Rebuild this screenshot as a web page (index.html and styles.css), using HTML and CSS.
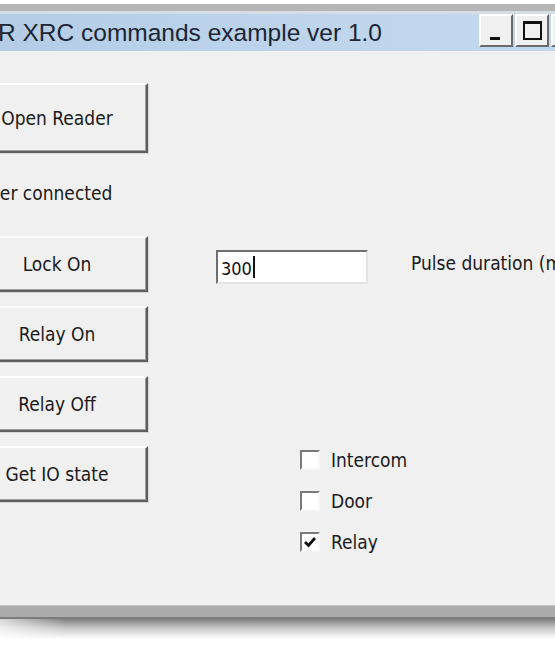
FILE: index.html
```html
<!DOCTYPE html>
<html lang="en">
<head>
    <meta charset="UTF-8">
    <meta name="viewport" content="width=device-width, initial-scale=1.0">
    <title>XRC commands example</title>
    <link rel="stylesheet" href="styles.css">
</head>
<body>
    <div class="window">
        <div class="titlebar">
            <span class="title">R XRC commands example ver 1.0</span>
            <div class="caption-buttons">
                <button class="cap-btn min"><span class="min-glyph"></span></button>
                <button class="cap-btn max"><span class="max-glyph"></span></button>
                <button class="cap-btn close"></button>
            </div>
        </div>
        <div class="client">
            <button class="btn open">Open Reader</button>
            <div class="status">Reader connected</div>

            <div class="row">
                <button class="btn">Lock On</button>
                <input class="field" type="text" value="300">
                <span class="caret"></span>
                <span class="label">Pulse duration (ms)</span>
            </div>
            <div class="row">
                <button class="btn">Relay On</button>
            </div>
            <div class="row">
                <button class="btn">Relay Off</button>
            </div>
            <div class="row">
                <button class="btn">Get IO state</button>
                <div class="checks">
                    <label class="check"><span class="box"></span>Intercom</label>
                    <label class="check"><span class="box"></span>Door</label>
                    <label class="check"><span class="box">
                        <svg width="14" height="14" viewBox="0 0 14 14"><path d="M2 7 L5.5 10.5 L12 3" fill="none" stroke="#111" stroke-width="2.8"/></svg>
                    </span>Relay</label>
                </div>
            </div>
        </div>
        <div class="frame-bottom"></div>
        <div class="shadow"></div>
    </div>
</body>
</html>
```

FILE: styles.css
```css
body {
    margin: 0;
    background-color: #ffffff;
    font-family: "DejaVu Sans Condensed", "DejaVu Sans", sans-serif;
    overflow: hidden;
}

.window {
    padding-top: 4px;
}

.titlebar {
    display: flex;
    align-items: center;
    justify-content: space-between;
    height: 37px;
    border-top: 7px solid #b6b6b6;
    box-shadow: inset 0 3px 0 #d8dde3;
    background: linear-gradient(to right, #b4cce6, #bed5ec 60%, #c2d8ee);
    padding-top: 3px;
    overflow: hidden;
}

.title {
    margin-left: -2px;
    font-family: "Liberation Sans", Arial, sans-serif;
    font-size: 24.5px;
    color: #1c2533;
    white-space: nowrap;
}

.caption-buttons {
    display: flex;
    gap: 2px;
    margin-right: -30px;
    align-self: flex-start;
}

.cap-btn {
    width: 34px;
    height: 33px;
    padding: 0;
    background-color: #f0f0f0;
    border: 2px solid;
    border-color: #ffffff #6a6a6a #6a6a6a #ffffff;
    position: relative;
}

.min-glyph {
    position: absolute;
    left: 9px;
    bottom: 5px;
    width: 10px;
    height: 3px;
    background-color: #111;
}

.max-glyph {
    position: absolute;
    left: 6px;
    top: 5px;
    width: 15px;
    height: 14px;
    border: 2px solid #111;
    border-top-width: 3px;
}

.client {
    background-color: #f0f0f0;
    height: 554px;
    padding-top: 32px;
    box-sizing: border-box;
}

.btn {
    display: block;
    flex-shrink: 0;
    margin-left: -34px;
    width: 182px;
    height: 56px;
    background-color: #f0f0f0;
    border: 2px solid;
    border-color: #ffffff #5e5e5e #5e5e5e #ffffff;
    box-shadow: inset -1px -1px 0 #a0a0a0, 1px 1px 0 #d6d6d6;
    font-family: "DejaVu Sans Condensed", "DejaVu Sans", sans-serif;
    font-size: 19px;
    color: #1a1a1a;
    padding: 0;
}

.btn.open {
    height: 70px;
    margin-bottom: 29px;
}

.status {
    font-size: 19px;
    color: #1a1a1a;
    margin-left: -43px;
    height: 22px;
    line-height: 22px;
    margin-bottom: 32px;
    white-space: nowrap;
}

.row {
    display: flex;
    align-items: flex-start;
    margin-bottom: 14px;
}

.field {
    flex-shrink: 0;
    margin-left: 68px;
    margin-top: 14px;
    width: 152px;
    height: 34px;
    box-sizing: border-box;
    border: 2px solid;
    border-color: #6e6e6e #e4e4e4 #e4e4e4 #6e6e6e;
    background-color: #fff;
    font-family: "DejaVu Sans Condensed", "DejaVu Sans", sans-serif;
    font-size: 18px;
    padding: 2px 3px 0;
    color: #111;
}

.caret {
    flex-shrink: 0;
    width: 2px;
    height: 22px;
    background-color: #111;
    margin-left: -115px;
    margin-top: 20px;
    margin-right: 113px;
}

.label {
    margin-left: 43px;
    margin-top: 16px;
    font-size: 19px;
    color: #1a1a1a;
    white-space: nowrap;
}

.checks {
    display: flex;
    flex-direction: column;
    gap: 20px;
    margin-left: 152px;
    margin-top: 3px;
}

.check {
    display: flex;
    align-items: center;
    height: 21px;
    font-size: 19px;
    color: #1a1a1a;
}

.box {
    display: flex;
    align-items: center;
    justify-content: center;
    width: 20px;
    height: 20px;
    box-sizing: border-box;
    border: 2px solid;
    border-color: #7a7a7a #f8f8f8 #f8f8f8 #7a7a7a;
    background-color: #fff;
    margin-right: 11px;
}

.frame-bottom {
    height: 11px;
    background-color: #ababab;
    border-top: 1px solid #c4c4c4;
    border-bottom: 2px solid #7c7c7c;
}

.shadow {
    height: 20px;
    background:
        linear-gradient(to right, rgba(255, 255, 255, 0.7), rgba(255, 255, 255, 0) 12%),
        linear-gradient(to bottom, #7e7e7e, #c8c8c8 45%, #ffffff);
}
```
